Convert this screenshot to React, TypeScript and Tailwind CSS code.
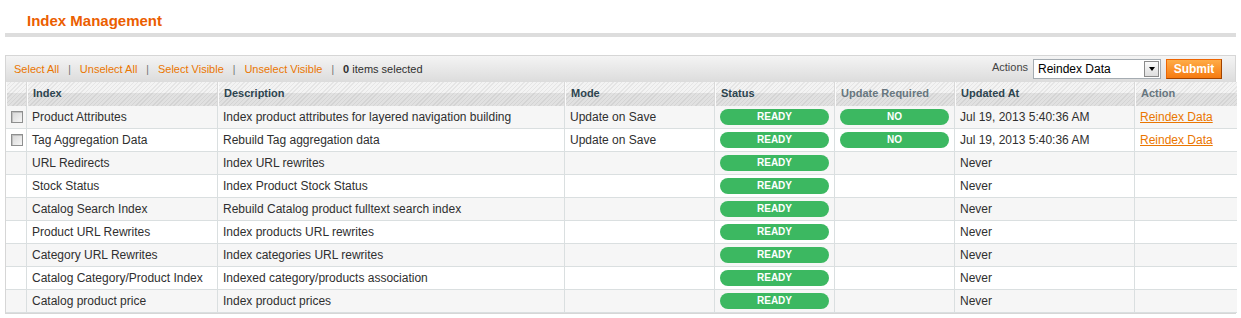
import { FC } from "react";

type Row = {
  index: string;
  description: string;
  mode?: string;
  required?: boolean;
  updated: string;
  selectable?: boolean;
};

const rows: Row[] = [
  { index: "Product Attributes", description: "Index product attributes for layered navigation building", mode: "Update on Save", required: true, updated: "Jul 19, 2013 5:40:36 AM", selectable: true },
  { index: "Tag Aggregation Data", description: "Rebuild Tag aggregation data", mode: "Update on Save", required: true, updated: "Jul 19, 2013 5:40:36 AM", selectable: true },
  { index: "URL Redirects", description: "Index URL rewrites", updated: "Never" },
  { index: "Stock Status", description: "Index Product Stock Status", updated: "Never" },
  { index: "Catalog Search Index", description: "Rebuild Catalog product fulltext search index", updated: "Never" },
  { index: "Product URL Rewrites", description: "Index products URL rewrites", updated: "Never" },
  { index: "Category URL Rewrites", description: "Index categories URL rewrites", updated: "Never" },
  { index: "Catalog Category/Product Index", description: "Indexed category/products association", updated: "Never" },
  { index: "Catalog product price", description: "Index product prices", updated: "Never" },
];

const headings = [
  { label: "", w: "w-[21px]", sortable: true },
  { label: "Index", w: "w-[191px]", sortable: true },
  { label: "Description", w: "w-[347px]", sortable: true },
  { label: "Mode", w: "w-[150px]", sortable: true },
  { label: "Status", w: "w-[120px]", sortable: true },
  { label: "Update Required", w: "w-[120px]", sortable: false },
  { label: "Updated At", w: "w-[180px]", sortable: true },
  { label: "Action", w: "w-[102px]", sortable: false },
];

const Sep = () => <span className="mx-[9px] text-[10px] text-[#6f6f6f]">|</span>;

const Badge: FC<{ label: string }> = ({ label }) => (
  <div className="h-[16px] rounded-full bg-[#3cb861] text-center text-[10px] font-bold leading-[16px] text-white">
    {label}
  </div>
);

const Checkbox = () => (
  <span className="block h-[12px] w-[12px] border border-[#8e8f8f] bg-[linear-gradient(135deg,#d6d6d6,#f6f6f6)] shadow-[inset_1px_1px_0_#c0c0c0]" />
);

export default function App() {
  return (
    <div className="w-[1241px] bg-white pt-[12px] font-['Liberation_Sans',Arial,sans-serif] text-[#2f2f2f]">
      <h3 className="pl-[27px] text-[15px] font-bold leading-[18px] text-[#eb5e00]">Index Management</h3>
      <div className="mx-[5px] mt-[3px] h-[4px] bg-[#dddddd]" />

      <div className="mx-[5px] mt-[18px] border border-[#d6d6d6]">
        <div className="flex h-[26px] items-center justify-between bg-[linear-gradient(to_bottom,#f4f4f4,#dcdcdc)] pl-[8px] pr-[13px] text-[11px]">
          <div className="flex items-center">
            <a className="text-[#ea7601]">Select All</a>
            <Sep />
            <a className="text-[#ea7601]">Unselect All</a>
            <Sep />
            <a className="text-[#ea7601]">Select Visible</a>
            <Sep />
            <a className="text-[#ea7601]">Unselect Visible</a>
            <Sep />
            <span><b>0</b> items selected</span>
          </div>
          <div className="flex items-center">
            <span className="-mt-[4px] mr-[5px] text-[#444]">Actions</span>
            <div className="flex h-[20px] w-[128px] items-center justify-between border border-[#a5acb2] bg-white pl-[4px] pr-[1px] text-[12px] text-black">
              <span>Reindex Data</span>
              <span className="flex h-[16px] w-[15px] items-center justify-center border border-[#8b8b8b] bg-[linear-gradient(to_bottom,#fafafa,#dedede)]">
                <span className="h-0 w-0 border-x-[3.5px] border-t-[4px] border-x-transparent border-t-black" />
              </span>
            </div>
            <button className="ml-[5px] h-[20px] w-[56px] border border-[#ed6502] border-r-[#a04300] border-b-[#a04300] bg-[linear-gradient(to_bottom,#ffac47,#f67a10)] text-[12px] font-bold text-white">
              Submit
            </button>
          </div>
        </div>

        <table className="w-full table-fixed border-separate border-spacing-0 text-[12px]">
          <colgroup>
            {headings.map((h, i) => (
              <col key={i} className={h.w} />
            ))}
          </colgroup>
          <thead>
            <tr className="[background:repeating-linear-gradient(135deg,rgba(0,0,0,0.06)_0_1px,transparent_1px_3px),linear-gradient(to_bottom,#f3f3f3_0,#f3f3f3_45%,#e1e1e1_45%,#e1e1e1_100%)]">
              {headings.map((h, i) => (
                <th
                  key={i}
                  className={`h-[24px] border-l border-l-[#fbfbfb] px-[5px] pt-[1px] text-left align-top text-[11px] font-bold leading-[20px] ${
                    i < headings.length - 1 ? "border-r border-r-[#d9d9d9]" : ""
                  } ${h.sortable ? "text-[#2d444f]" : "text-[#67767e]"}`}
                >
                  {h.label}
                </th>
              ))}
            </tr>
          </thead>
          <tbody>
            {rows.map((r, i) => {
              const cell = "h-[23px] border-b border-r border-[#dadfe0] px-[5px]";
              return (
                <tr key={r.index} className={i % 2 === 0 ? "bg-[#f6f6f6]" : "bg-white"}>
                  <td className={`${cell} pl-[5px]`}>{r.selectable && <Checkbox />}</td>
                  <td className={cell}>{r.index}</td>
                  <td className={cell}>{r.description}</td>
                  <td className={cell}>{r.mode}</td>
                  <td className={`${cell} px-[4px]`}>
                    <Badge label="READY" />
                  </td>
                  <td className={`${cell} px-[4px]`}>{r.required && <Badge label="NO" />}</td>
                  <td className={cell}>{r.updated}</td>
                  <td className="h-[23px] border-b border-[#dadfe0] px-[5px]">
                    {r.selectable && <a className="text-[#ea7601] underline">Reindex Data</a>}
                  </td>
                </tr>
              );
            })}
          </tbody>
        </table>
      </div>
    </div>
  );
}
